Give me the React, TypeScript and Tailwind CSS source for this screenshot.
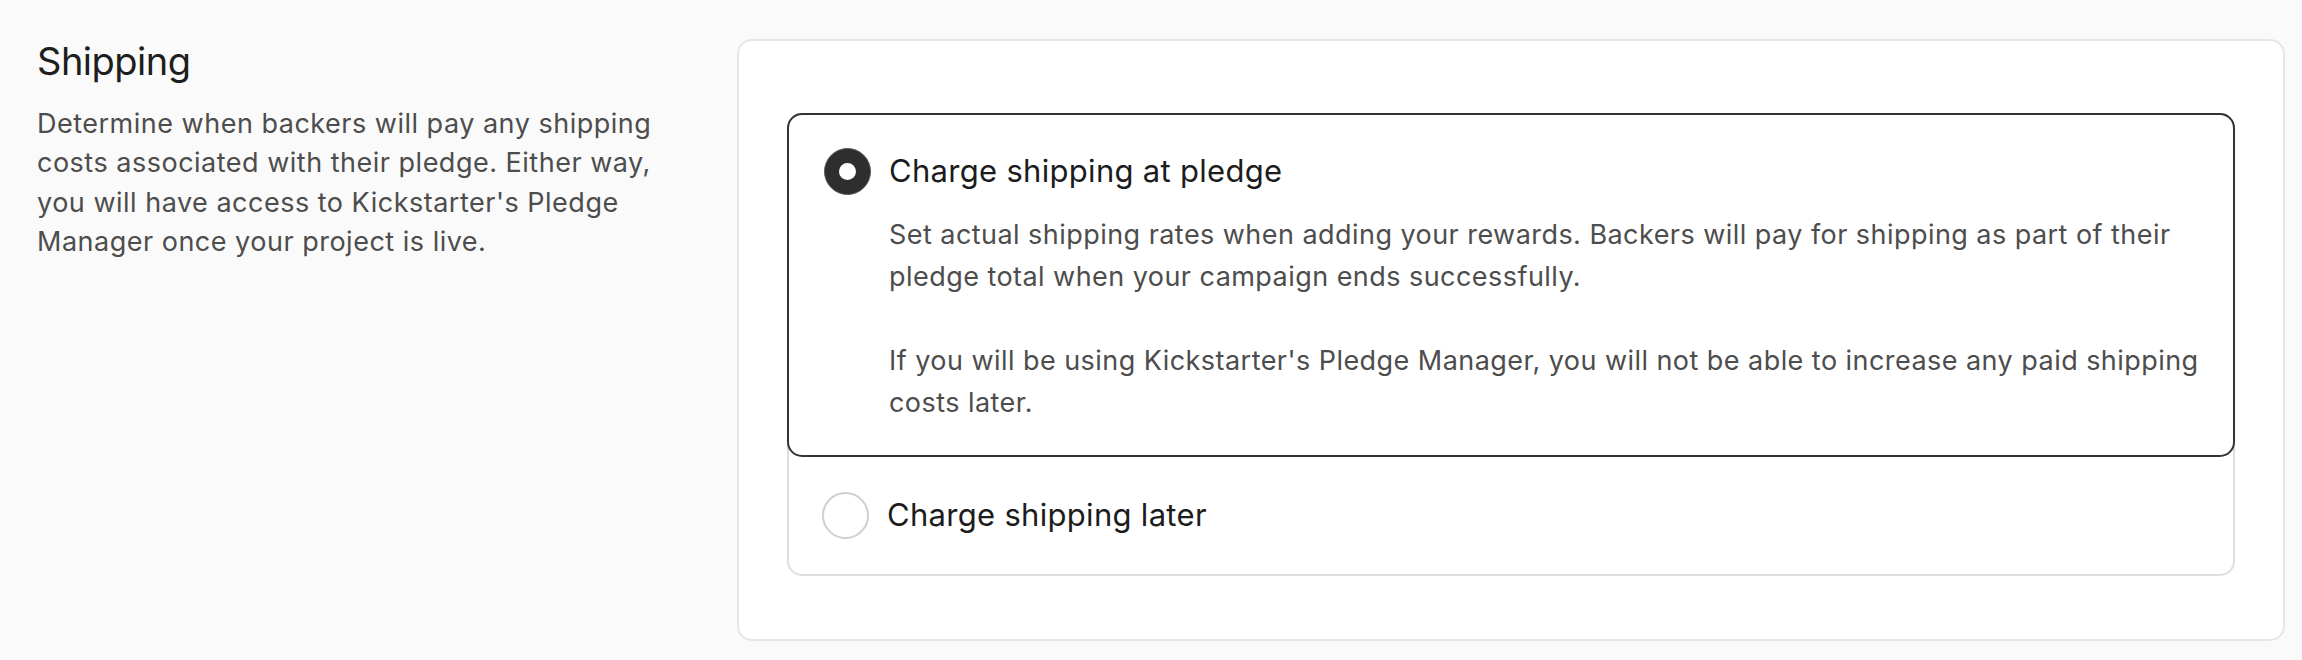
import React from "react";

function Radio({ checked }: { checked: boolean }) {
  return checked ? (
    <span className="flex h-[47px] w-[47px] shrink-0 items-center justify-center rounded-full border border-[#555] bg-[#2e2e2e]">
      <span className="h-[17px] w-[17px] rounded-full bg-white" />
    </span>
  ) : (
    <span className="h-[47px] w-[47px] shrink-0 rounded-full border-2 border-[#cfcfcf] bg-white" />
  );
}

export default function App() {
  return (
    <div
      className="flex min-h-[660px] w-full bg-[#fafafa] pl-[37px] pr-[17px] pt-[39px]"
      style={{ fontFamily: "Inter, 'Noto Sans', sans-serif" }}
    >
      <div className="mr-[50px] w-[650px] shrink-0">
        <h2 className="text-[38px] font-normal leading-[1.2] tracking-[-0.5px] text-[#1e1e1e]">Shipping</h2>
        <p className="mt-[19px] w-[630px] text-[27px] leading-[39.5px] tracking-[0.5px] text-[#4d4d4d]">
          Determine when backers will pay any shipping costs associated with their pledge. Either way, you will have
          access to Kickstarter's Pledge Manager once your project is live.
        </p>
      </div>

      <div className="h-[602px] flex-1 rounded-[15px] border-2 border-[#e6e6e6] bg-white px-[48px] pb-[65px] pt-[72px]">
        <div className="rounded-[15px] border-2 border-[#dedede]">
          <div className="-m-[2px] rounded-[15px] border-2 border-[#333] pb-[31px] pl-[35px] pr-[20px] pt-[33px]">
            <div className="flex items-center gap-[18px]">
              <Radio checked />
              <span className="text-[31px] leading-[1.3] tracking-[0.3px] text-[#1c1c1c]">Charge shipping at pledge</span>
            </div>
            <div className="mt-[19px] pl-[65px] text-[27px] leading-[42px] tracking-[0.45px] text-[#4d4d4d]">
              <p>
                Set actual shipping rates when adding your rewards. Backers will pay for shipping as part of their pledge
                total when your campaign ends successfully.
              </p>
              <p className="mt-[42px]">
                If you will be using Kickstarter's Pledge Manager, you will not be able to increase any paid shipping
                costs later.
              </p>
            </div>
          </div>
          <div className="flex items-center gap-[18px] px-[33px] pb-[35px] pt-[37px]">
            <Radio checked={false} />
            <span className="text-[31px] leading-[1.3] tracking-[0.3px] text-[#1c1c1c]">Charge shipping later</span>
          </div>
        </div>
      </div>
    </div>
  );
}
